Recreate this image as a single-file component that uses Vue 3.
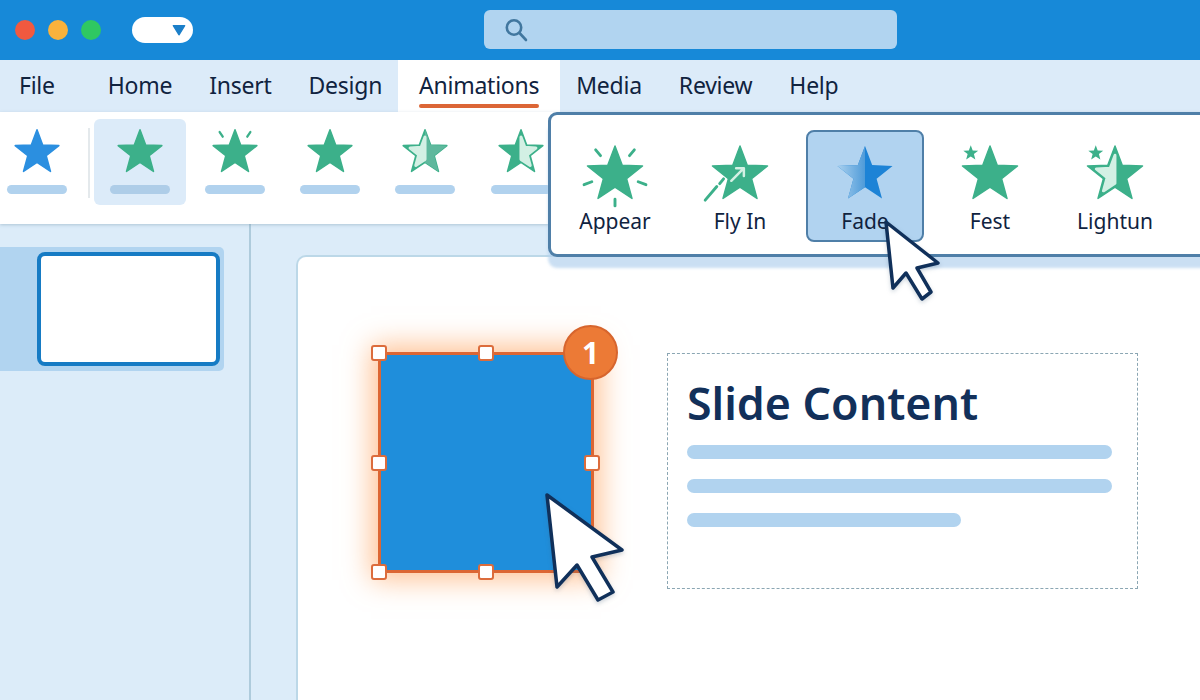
<script setup>
const STAR = 'M30 1 L37.4 20.8 L58.5 21.7 L42 34.9 L47.6 55.3 L30 43.6 L12.4 55.3 L18 34.9 L1.5 21.7 L22.6 20.8 Z'
const LEFT = '30,10.6 25,24 10.6,24.7 21.8,33.7 18,47.5 30,39.6'
const RIGHT = '30,10.6 35,24 49.4,24.7 38.2,33.7 42,47.5 30,39.6'
const tabs = ['File', 'Home', 'Insert', 'Design', 'Animations', 'Media', 'Review', 'Help']
const ribbon = ['blue', 'plain', 'burst', 'plain', 'halfl', 'halfr']
const effects = [
  { name: 'Appear', kind: 'appear' },
  { name: 'Fly In', kind: 'fly' },
  { name: 'Fade', kind: 'fade' },
  { name: 'Fest', kind: 'fest' },
  { name: 'Lightun', kind: 'light' }
]
const handles = ['tl', 'tm', 'ml', 'mr', 'bl', 'bm']
</script>

<template>
  <div class="app">
    <header class="titlebar">
      <div class="dots">
        <span class="dot red"></span>
        <span class="dot amber"></span>
        <span class="dot green"></span>
      </div>
      <div class="pill">
        <svg width="14" height="12" viewBox="0 0 16 13"><path d="M1.5 1.5 H14.5 L8 12 Z" fill="#1b7fc9" stroke="#1b7fc9" stroke-width="1.5" stroke-linejoin="round" /></svg>
      </div>
      <div class="search">
        <svg width="26" height="26" viewBox="0 0 26 26" fill="none" stroke="#41779f" stroke-width="2.6">
          <circle cx="11" cy="10.5" r="7.2" />
          <path d="M16.5 16 L23 23" stroke-linecap="round" />
        </svg>
      </div>
    </header>

    <nav class="tabs">
      <div v-for="t in tabs" :key="t" class="tab" :class="{ active: t === 'Animations', first: t === 'File' }">
        <span class="tab-label">{{ t }}</span>
      </div>
    </nav>

    <section class="ribbon">
      <template v-for="(r, i) in ribbon" :key="i">
        <div class="rib-item" :class="{ selected: i === 1 }">
          <svg class="rib-star" viewBox="0 0 60 60">
            <path :d="STAR" :fill="r === 'blue' ? '#2b8fe0' : '#3cb08a'" :stroke="r === 'blue' ? '#2b8fe0' : '#3cb08a'" stroke-width="2" stroke-linejoin="round" />
            <template v-if="r === 'burst'">
              <path d="M10 4 L14 10 M50 4 L46 10" stroke="#3cb08a" stroke-width="3" stroke-linecap="round" />
            </template>
            <template v-if="r === 'halfl'">
              <path d="M30 1 L37.4 20.8 L58.5 21.7 L42 34.9 L47.6 55.3 L30 43.6 Z" fill="#5fb89d" />
              <polygon :points="LEFT" fill="#d3f0e4" stroke="#d3f0e4" stroke-width="4" stroke-linejoin="round" />
            </template>
            <template v-if="r === 'halfr'">
              <polygon :points="RIGHT" fill="#d3f0e4" stroke="#d3f0e4" stroke-width="4" stroke-linejoin="round" />
            </template>
          </svg>
          <span class="rib-bar"></span>
        </div>
        <span v-if="i === 0" class="rib-divider"></span>
      </template>
    </section>

    <main class="workspace">
      <aside class="sidebar">
        <div class="thumb-row">
          <div class="thumb"></div>
        </div>
      </aside>
      <div class="canvas">
        <article class="slide">
          <div class="shape">
            <span v-for="h in handles" :key="h" class="handle" :class="h"></span>
            <span class="badge">1</span>
          </div>
          <div class="textbox">
            <h1 class="title">Slide Content</h1>
            <span class="line"></span>
            <span class="line"></span>
            <span class="line short"></span>
          </div>
        </article>
      </div>
    </main>

    <div class="popup">
      <div v-for="e in effects" :key="e.name" class="effect" :class="{ on: e.kind === 'fade' }">
        <svg class="effect-star" viewBox="0 0 60 60">
          <defs>
            <linearGradient id="fadeL" x1="0" x2="1" y1="0" y2="0">
              <stop offset="0" stop-color="#a9d0ee" />
              <stop offset="1" stop-color="#4f9bd9" />
            </linearGradient>
          </defs>
          <template v-if="e.kind === 'fade'">
            <path :d="STAR" fill="#1d83d6" />
            <path d="M30 1 L22.6 20.8 L1.5 21.7 L18 34.9 L12.4 55.3 L30 43.6 Z" fill="url(#fadeL)" />
          </template>
          <path v-else :d="STAR" fill="#3cb08a" stroke="#3cb08a" stroke-width="1.5" stroke-linejoin="round" />
          <g v-if="e.kind === 'appear'" stroke="#3cb08a" stroke-width="3" stroke-linecap="round">
            <path d="M10 5 L15 11 M50 5 L45 11 M-2 41 L6 38 M62 41 L54 38 M30 56 L30 63" />
          </g>
          <g v-if="e.kind === 'fly'" fill="none" stroke="#d3f0e4" stroke-width="2.6" stroke-linecap="round" stroke-linejoin="round">
            <path d="M21 37 L33 25 M26 24 L34 24 L34 32" />
            <path d="M-6 57 L6 43 M9 40 L13 35" stroke="#3cb08a" stroke-width="3" />
          </g>
          <path v-if="e.kind === 'fest' || e.kind === 'light'" transform="translate(2 0) scale(.27)" :d="STAR" fill="#3cb08a" />
          <polygon v-if="e.kind === 'light'" :points="LEFT" fill="#d3f0e4" stroke="#d3f0e4" stroke-width="3" stroke-linejoin="round" />
        </svg>
        <span class="effect-name">{{ e.name }}</span>
      </div>
    </div>

    <svg class="cursor cursor-a" width="66" height="86" viewBox="880 218 66 86">
      <path d="M886 222 L938 263 L917 268 L931 292 L922 299 L906 273 L893 288 Z" fill="#fff" stroke="#10305a" stroke-width="3.5" stroke-linejoin="round" />
    </svg>
    <svg class="cursor cursor-b" width="86" height="116" viewBox="542 490 86 116">
      <path d="M547 495 L622 550 L592 557 L613 592 L598 600 L577 565 L557 587 Z" fill="#fff" stroke="#10305a" stroke-width="3.5" stroke-linejoin="round" />
    </svg>
  </div>
</template>

<style scoped>
.app {
  position: relative;
  width: 1200px;
  height: 700px;
  overflow: hidden;
  display: flex;
  flex-direction: column;
  background: #dcecf9;
  font-family: "Noto Sans", "Open Sans", sans-serif;
  color: #10233f;
}
.titlebar {
  height: 60px;
  flex: none;
  box-sizing: border-box;
  background: #1789d8;
  display: flex;
  align-items: center;
  padding: 0 0 1px 15px;
}
.dots { display: flex; gap: 13px; }
.dot { width: 20px; height: 20px; border-radius: 50%; }
.red { background: #f1593f; }
.amber { background: #f9b23c; }
.green { background: #2fc862; }
.pill {
  margin-left: 31px;
  width: 61px;
  height: 26px;
  border-radius: 13px;
  background: #fff;
  display: flex;
  align-items: center;
  justify-content: flex-end;
  padding-right: 7px;
  box-sizing: border-box;
}
.search {
  margin-left: 291px;
  width: 413px;
  height: 39px;
  border-radius: 6px;
  background: #b1d4f0;
  display: flex;
  align-items: center;
  padding-left: 19px;
  box-sizing: border-box;
}
.tabs {
  height: 52px;
  flex: none;
  display: flex;
  background: #dcebf9;
}
.tab {
  padding: 0 18.5px;
  height: 52px;
  display: flex;
  align-items: center;
  font-size: 23px;
  letter-spacing: -.25px;
  position: relative;
}
.tab.first { margin-right: 16px; padding-left: 19px; }
.tab.active { background: #fff; padding: 0 21px; margin: 0 -2.5px; }
.tab.active::after {
  content: "";
  position: absolute;
  left: 21px;
  right: 21px;
  top: 44px;
  height: 4px;
  background: #dc6636;
  border-radius: 2px;
}
.tab-label { position: relative; top: -1px; }
.ribbon {
  height: 112px;
  flex: none;
  background: #fff;
  display: flex;
  align-items: flex-start;
  padding: 7px 0 0 0;
  box-sizing: border-box;
  gap: 3.25px;
  box-shadow: 0 1px 3px rgba(120, 150, 170, .45);
  position: relative;
}
.rib-item {
  width: 92px;
  height: 86px;
  border-radius: 6px;
  display: flex;
  flex-direction: column;
  align-items: center;
  padding-top: 10px;
  box-sizing: border-box;
}
.rib-item:first-child { width: 73px; }
.rib-item.selected { background: #dcebf9; }
.rib-item.selected .rib-bar { background: #aecde8; }
.rib-star { width: 46px; height: 46px; overflow: visible; }
.rib-bar {
  margin-top: 10px;
  width: 60px;
  height: 9px;
  border-radius: 5px;
  background: #b1d2ee;
}
.rib-divider {
  width: 2px;
  height: 70px;
  margin: 9px 0 0 12px;
  background: #e4e9ec;
}
.workspace {
  flex: 1;
  display: flex;
  min-height: 0;
}
.sidebar {
  width: 251px;
  flex: none;
  box-sizing: border-box;
  border-right: 2px solid #aecbdc;
  padding-top: 23px;
}
.thumb-row {
  width: 224px;
  height: 124px;
  background: #b1d4f0;
  border-radius: 0 5px 5px 0;
  display: flex;
  align-items: center;
  justify-content: flex-end;
  padding-right: 4px;
  box-sizing: border-box;
}
.thumb {
  width: 183px;
  height: 114px;
  box-sizing: border-box;
  border: 4px solid #167bc4;
  border-radius: 8px;
  background: #fff;
}
.canvas {
  flex: 1;
  padding: 31px 0 0 45px;
  min-width: 0;
}
.slide {
  height: 100%;
  box-sizing: border-box;
  background: #fff;
  border-top: 2px solid #bcd8e8;
  border-left: 2px solid #bcd8e8;
  border-radius: 10px 0 0 0;
  display: flex;
  align-items: flex-start;
  padding: 95px 0 0 80px;
  gap: 73px;
}
.shape {
  position: relative;
  width: 216px;
  height: 221px;
  flex: none;
  box-sizing: border-box;
  background: #1f8edb;
  border: 3px solid #dc6633;
  box-shadow: 0 0 26px 7px rgba(255, 155, 80, .6);
}
.handle {
  position: absolute;
  width: 16px;
  height: 16px;
  box-sizing: border-box;
  background: #fff;
  border: 2px solid #dc6c3c;
  border-radius: 3px;
}
.tl { left: -10px; top: -10px; }
.tm { left: 97px; top: -10px; }
.ml { left: -10px; top: 100px; }
.mr { left: 203px; top: 100px; }
.bl { left: -10px; top: 209px; }
.bm { left: 97px; top: 209px; }
.badge {
  position: absolute;
  left: 182px;
  top: -30px;
  width: 55px;
  height: 55px;
  box-sizing: border-box;
  border-radius: 50%;
  background: #ec7a36;
  border: 2px solid #d7652d;
  color: #fff;
  font-size: 30px;
  font-weight: 700;
  display: flex;
  align-items: center;
  justify-content: center;
}
.textbox {
  width: 471px;
  height: 236px;
  margin-top: 1px;
  flex: none;
  box-sizing: border-box;
  border: 1px dashed #8ba6b3;
  padding: 18px 25px 0 19px;
  display: flex;
  flex-direction: column;
}
.title {
  margin: 0 0 11px;
  font-size: 44.7px;
  line-height: 62px;
  font-weight: 600;
  color: #12305a;
}
.line {
  height: 14px;
  border-radius: 7px;
  background: #b1d3ef;
  margin-bottom: 20px;
}
.line.short { width: 274px; }
.popup {
  position: absolute;
  left: 548px;
  top: 112px;
  width: 680px;
  height: 145px;
  box-sizing: border-box;
  background: #fff;
  border: 3px solid #4f7fa8;
  border-radius: 9px;
  box-shadow: 0 11px 3px rgba(180, 210, 238, .7);
  display: flex;
  align-items: flex-start;
  padding: 15px 0 0 5px;
  gap: 7px;
}
.effect {
  width: 118px;
  height: 112px;
  flex: none;
  box-sizing: border-box;
  border: 2px solid transparent;
  border-radius: 8px;
  display: flex;
  flex-direction: column;
  align-items: center;
  padding-top: 13px;
}
.effect.on { background: #b1d3f0; border-color: #4f7fa8; }
.effect-star { width: 58px; height: 58px; overflow: visible; flex: none; }
.effect-name { font-size: 21px; line-height: 28px; margin-top: 4px; color: #10233f; }
.cursor { position: absolute; }
.cursor-a { left: 880px; top: 218px; filter: drop-shadow(0 2px 2px rgba(60, 90, 120, .25)); }
.cursor-b { left: 542px; top: 490px; filter: drop-shadow(0 2px 2px rgba(60, 90, 120, .25)); }
</style>
